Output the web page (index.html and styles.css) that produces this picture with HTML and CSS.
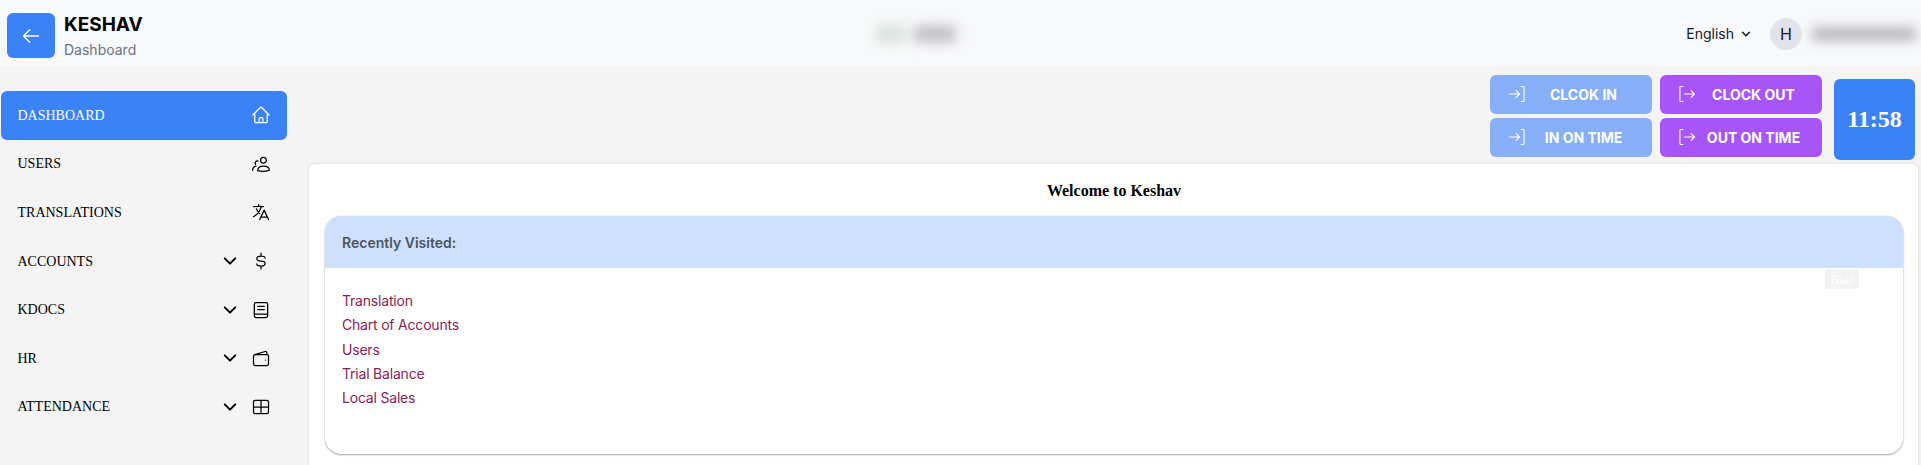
FILE: index.html
```html
<!DOCTYPE html>
<html lang="en">
<head>
    <meta charset="UTF-8">
    <meta name="viewport" content="width=device-width, initial-scale=1.0">
    <title>Keshav - Dashboard</title>
    <link rel="stylesheet" href="styles.css">
</head>
<body>
    <header class="topbar">
        <div class="brand">
            <button class="back-btn" type="button">
                <svg class="icon-back" viewBox="0 0 24 24"><path d="M10.5 19.5 3 12m0 0 7.5-7.5M3 12h18"/></svg>
            </button>
            <div class="brand-text">
                <div class="brand-name">KESHAV</div>
                <div class="brand-sub">Dashboard</div>
            </div>
        </div>
        <div class="blurred blurred-center"><span class="blob-green"></span><span class="blob-gray"></span></div>
        <div class="topbar-right">
            <div class="lang">English
                <svg class="chevron-sm" viewBox="0 0 24 24"><path d="m5 8.5 7 7 7-7"/></svg>
            </div>
            <div class="avatar">H</div>
            <div class="blurred blurred-user"><span class="blob-name"></span><span class="blob-name"></span></div>
        </div>
    </header>

    <div class="layout">
        <nav class="sidebar">
            <a class="nav-item active">
                <span class="nav-label">DASHBOARD</span>
                <svg class="nav-icon" viewBox="0 0 24 24"><path d="M2.25 12l8.954-8.955c.44-.439 1.152-.439 1.591 0L21.75 12M4.5 9.75v10.125c0 .621.504 1.125 1.125 1.125H9.75v-4.875c0-.621.504-1.125 1.125-1.125h2.25c.621 0 1.125.504 1.125 1.125V21h4.125c.621 0 1.125-.504 1.125-1.125V9.75M8.25 21h8.25"/></svg>
            </a>
            <a class="nav-item">
                <span class="nav-label">USERS</span>
                <svg class="nav-icon" viewBox="0 0 24 24"><path d="M18.5 7.5a3.5 3.5 0 1 1-7 0 3.5 3.5 0 0 1 7 0ZM8 20c0-3.5 3-5.5 7-5.5s7 2 7 5c-4 1.5-10 1.7-14 .5ZM8.5 8.5a2.6 2.6 0 0 0-3 4M2 19.5c0-2.5 1.500-4.500 4-5"/></svg>
            </a>
            <a class="nav-item">
                <span class="nav-label">TRANSLATIONS</span>
                <svg class="nav-icon" viewBox="0 0 24 24"><path d="M10.5 21l5.25-11.25L21 21m-9-3h7.5M3 5.621a48.474 48.474 0 0 1 6-.371m0 0c1.12 0 2.233.038 3.334.114M9 5.25V3m3.334 2.364C11.176 10.658 7.69 15.08 3 17.502m9.334-12.138c.896.061 1.785.147 2.666.257m-4.589 8.495a18.023 18.023 0 0 1-3.827-5.802"/></svg>
            </a>
            <a class="nav-item">
                <span class="nav-label">ACCOUNTS</span>
                <svg class="nav-chevron" viewBox="0 0 24 24"><path d="m5 8.5 7 7 7-7"/></svg>
                <svg class="nav-icon" viewBox="0 0 24 24"><path d="M12 2.5v3.500M12 18v3.500M17 8.500C17 7 15 6 12 6S7 7.200 7 9s2 3 5 3 5 1.200 5 3-2 3-5 3-5-1-5-2.500"/></svg>
            </a>
            <a class="nav-item">
                <span class="nav-label">KDOCS</span>
                <svg class="nav-chevron" viewBox="0 0 24 24"><path d="m5 8.5 7 7 7-7"/></svg>
                <svg class="nav-icon" viewBox="0 0 24 24"><path d="M6 3h12a2 2 0 0 1 2 2v14a2 2 0 0 1-2 2H6a2 2 0 0 1-2-2V5a2 2 0 0 1 2-2ZM4 17h16M8 7.500h8M8 11.500h8"/></svg>
            </a>
            <a class="nav-item">
                <span class="nav-label">HR</span>
                <svg class="nav-chevron" viewBox="0 0 24 24"><path d="m5 8.5 7 7 7-7"/></svg>
                <svg class="nav-icon" viewBox="0 0 24 24"><path d="M5 8h14a2 2 0 0 1 2 2v9a2 2 0 0 1-2 2H5a2 2 0 0 1-2-2v-9a2 2 0 0 1 2-2ZM3 10c0-1 .6-1.800 1.600-2.100L17 4.200c1-.3 2 .4 2 1.500V8M17.500 14.500h.01"/></svg>
            </a>
            <a class="nav-item">
                <span class="nav-label">ATTENDANCE</span>
                <svg class="nav-chevron" viewBox="0 0 24 24"><path d="m5 8.5 7 7 7-7"/></svg>
                <svg class="nav-icon" viewBox="0 0 24 24"><path d="M5 4h14a2 2 0 0 1 2 2v12a2 2 0 0 1-2 2H5a2 2 0 0 1-2-2V6a2 2 0 0 1 2-2ZM12 4v16M3 12h18"/></svg>
            </a>
        </nav>

        <main class="main">
            <div class="actions">
                <div class="action-grid">
                    <button class="action-btn btn-in" type="button">
                        <svg class="action-icon" viewBox="0 0 24 24"><path d="M3 12h12M11 8l4 4-4 4M17 3h2.500a1 1 0 0 1 1 1v16a1 1 0 0 1-1 1H17"/></svg>
                        <span class="action-label">CLCOK IN</span>
                    </button>
                    <button class="action-btn btn-out" type="button">
                        <svg class="action-icon" viewBox="0 0 24 24"><path d="M7 3H4.500a1 1 0 0 0-1 1v16a1 1 0 0 0 1 1H7M9 12h12M17 8l4 4-4 4"/></svg>
                        <span class="action-label">CLOCK OUT</span>
                    </button>
                    <button class="action-btn btn-in" type="button">
                        <svg class="action-icon" viewBox="0 0 24 24"><path d="M3 12h12M11 8l4 4-4 4M17 3h2.500a1 1 0 0 1 1 1v16a1 1 0 0 1-1 1H17"/></svg>
                        <span class="action-label">IN ON TIME</span>
                    </button>
                    <button class="action-btn btn-out" type="button">
                        <svg class="action-icon" viewBox="0 0 24 24"><path d="M7 3H4.500a1 1 0 0 0-1 1v16a1 1 0 0 0 1 1H7M9 12h12M17 8l4 4-4 4"/></svg>
                        <span class="action-label">OUT ON TIME</span>
                    </button>
                </div>
                <div class="clock">11:58</div>
            </div>

            <section class="card">
                <h1 class="welcome">Welcome to Keshav</h1>
                <div class="recent">
                    <div class="recent-head">Recently Visited:</div>
                    <span class="blur-chip">Blur</span>
                    <ul class="recent-list">
                        <li>Translation</li>
                        <li>Chart of Accounts</li>
                        <li>Users</li>
                        <li>Trial Balance</li>
                        <li>Local Sales</li>
                    </ul>
                </div>
            </section>
        </main>
    </div>
</body>
</html>
```

FILE: styles.css
```css
* {
    box-sizing: border-box;
}
html, body {
    height: 465px;
    overflow: hidden;
}
body {
    margin: 0;
    font-family: Inter, "Liberation Sans", sans-serif;
    background-color: #f4f4f5;
    color: #000;
}
svg {
    fill: none;
    stroke: currentColor;
    stroke-linecap: round;
    stroke-linejoin: round;
    display: block;
    flex: none;
}

/* top bar */
.topbar {
    height: 67px;
    background-color: #f8f9fb;
    display: flex;
    align-items: center;
    justify-content: space-between;
    padding: 0 0 0 7px;
    position: relative;
}
.brand {
    display: flex;
    align-items: center;
    gap: 9px;
    padding-top: 4px;
}
.back-btn {
    width: 48px;
    height: 45px;
    background-color: #3b82f6;
    border: none;
    border-radius: 6px;
    color: #fff;
    display: flex;
    align-items: center;
    justify-content: center;
    padding: 0;
}
.icon-back {
    width: 20px;
    height: 20px;
    stroke-width: 1.6;
}
.brand-text {
    padding-top: 3px;
}
.brand-name {
    font-size: 19px;
    font-weight: 700;
    line-height: 26px;
}
.brand-sub {
    font-size: 14px;
    line-height: 24px;
    color: #6b7280;
}
.blurred {
    filter: blur(6px);
    display: flex;
}
.blurred-center {
    position: absolute;
    left: 876px;
    top: 25px;
    gap: 8px;
}
.blob-green {
    width: 30px;
    height: 18px;
    background-color: #d8e4dd;
}
.blob-gray {
    width: 42px;
    height: 18px;
    background-color: #c4c4c7;
}
.topbar-right {
    display: flex;
    align-items: center;
}
.lang {
    display: flex;
    align-items: center;
    gap: 6px;
    font-size: 14px;
    color: #111827;
    margin-right: 18px;
}
.chevron-sm {
    width: 12px;
    height: 12px;
    stroke-width: 3;
}
.avatar {
    width: 32px;
    height: 32px;
    border-radius: 50%;
    background-color: #e0e3e9;
    display: flex;
    align-items: center;
    justify-content: center;
    font-size: 16px;
    color: #111827;
}
.blurred-user {
    width: 104px;
    margin: 0 5px 0 10px;
}
.blob-name {
    flex: 1;
    height: 14px;
    background-color: #b8b9bc;
}

/* layout */
.layout {
    display: flex;
    height: 398px;
}
.sidebar {
    width: 309px;
    flex: none;
    padding: 24px 22px 0 1px;
    font-family: "Liberation Serif", serif;
}
.nav-item {
    height: 48.6px;
    display: flex;
    align-items: center;
    padding: 0 16px 0 16.5px;
    font-size: 14px;
    color: #000;
    border-radius: 6px;
}
.nav-item.active {
    background-color: #3b82f6;
    color: #fff;
}
.nav-label {
    flex: 1;
    padding-top: 1px;
}
.nav-icon {
    width: 20px;
    height: 20px;
    stroke-width: 1.5;
}
.nav-chevron {
    width: 18px;
    height: 18px;
    stroke-width: 2.6;
    margin-right: 12px;
}

/* main */
.main {
    flex: 1;
    min-width: 0;
    padding: 8px 3px 0 0;
}
.actions {
    display: flex;
    justify-content: flex-end;
    align-items: flex-start;
    gap: 12px;
    height: 89px;
    padding-right: 3px;
}
.action-grid {
    display: grid;
    grid-template-columns: 162px 162px;
    grid-auto-rows: 38.5px;
    gap: 4.5px 8px;
}
.action-btn {
    display: flex;
    align-items: center;
    border: none;
    border-radius: 6px;
    color: #fff;
    font-family: Inter, "Liberation Sans", sans-serif;
    font-size: 14px;
    font-weight: 700;
    padding: 0 0 0 17px;
}
.btn-in {
    background-color: #86aff8;
}
.btn-out {
    background-color: #a855f7;
}
.action-icon {
    width: 20px;
    height: 20px;
    stroke-width: 1.3;
}
.action-label {
    flex: 1;
    text-align: center;
    padding-right: 12px;
}
.clock {
    width: 81px;
    height: 81px;
    margin-top: 4px;
    background-color: #3b82f6;
    border-radius: 6px;
    color: #fff;
    font-family: "Liberation Serif", serif;
    font-size: 24px;
    font-weight: 700;
    display: flex;
    align-items: center;
    justify-content: center;
}
.card {
    background-color: #fff;
    border-radius: 6px;
    height: 320px;
    padding: 0 15px 0 16px;
    box-shadow: 0 0 3px rgba(0, 0, 0, 0.15);
}
.welcome {
    margin: 0;
    height: 52px;
    display: flex;
    align-items: center;
    justify-content: center;
    padding-top: 1px;
    font-family: "Liberation Serif", serif;
    font-size: 16px;
    font-weight: 700;
}
.recent {
    position: relative;
    height: 238px;
    border-radius: 16px;
    overflow: hidden;
    background-color: #fff;
    box-shadow: 0 1px 2px rgba(0, 0, 0, 0.35), 0 0 1px rgba(0, 0, 0, 0.2);
}
.recent-head {
    height: 52px;
    background-color: #cfe0fc;
    color: #4b5563;
    font-size: 14px;
    font-weight: 600;
    display: flex;
    align-items: center;
    padding-left: 17px;
}
.blur-chip {
    position: absolute;
    left: 1500px;
    top: 53px;
    width: 34px;
    height: 20px;
    background-color: #f3f3f3;
    border-radius: 2px;
    color: #fff;
    font-size: 12px;
    display: flex;
    align-items: center;
    justify-content: center;
}
.recent-list {
    list-style: none;
    margin: 0;
    padding: 21px 0 0 17px;
    font-size: 14px;
    line-height: 24.3px;
    letter-spacing: -0.2px;
    color: #8b1d55;
}
```
